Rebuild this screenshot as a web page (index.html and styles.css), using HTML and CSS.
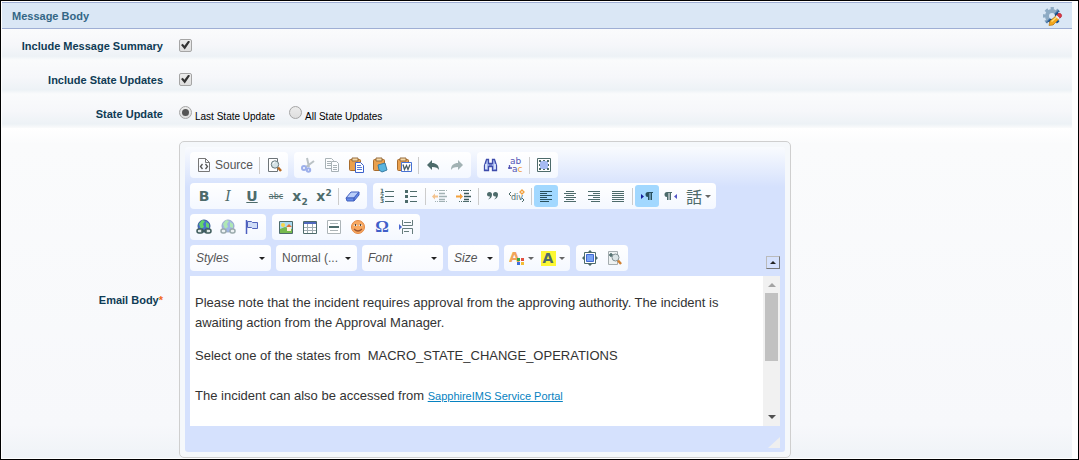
FILE: index.html
```html
<!DOCTYPE html>
<html lang="en">
<head>
  <meta charset="UTF-8">
  <meta name="viewport" content="width=device-width, initial-scale=1.0">
  <title>Message Body</title>
  <link rel="stylesheet" href="styles.css">
</head>
<body>
  <form class="message-body">
    <!-- Section header -->
    <div class="section-header">
      <h2>Message Body</h2>
      <button type="button" class="settings" aria-label="Customize">
        <svg width="20" height="20" viewBox="0 0 20 20">
          <defs><linearGradient id="steel" x1="0" y1="0" x2="1" y2="1"><stop offset=".45" stop-color="#8eabc4"/><stop offset=".6" stop-color="#174f8c"/></linearGradient></defs>
          <g fill="none" stroke="url(#steel)">
            <circle cx="9" cy="10" r="7.500" stroke-width="3" stroke-dasharray="3.200 2.690" stroke-dashoffset="1.600"/>
            <circle cx="9" cy="10" r="5" stroke-width="4"/>
          </g>
          <path d="M7 15l7-6 3 3-7 7-4 .500z" fill="#f3a71c" stroke="#b97813" stroke-width=".7"/>
          <path d="M8.500 15.500l6-5" stroke="#ffdc74" stroke-width="1.500"/>
          <path d="M12.500 10.500l2-2 3 3-2 2z" fill="#e9e7ef"/>
          <path d="M14 9c1-2 3-2 4-1s1 3-1 4z" fill="#dc3644" stroke="#ad2631" stroke-width=".6"/>
        </svg>
      </button>
    </div>

    <div class="row first">
      <label class="name" for="summary">Include Message Summary</label>
      <div class="field"><input type="checkbox" id="summary" checked></div>
    </div>
    <div class="row">
      <label class="name" for="updates">Include State Updates</label>
      <div class="field"><input type="checkbox" id="updates" checked></div>
    </div>
    <div class="row">
      <span class="name" id="stateLabel">State Update</span>
      <div class="field" role="radiogroup" aria-labelledby="stateLabel">
        <input type="radio" name="state" id="lastState" checked><label class="choice" for="lastState">Last State Update</label>
        <input type="radio" name="state" id="allStates"><label class="choice" for="allStates">All State Updates</label>
      </div>
    </div>

    <!-- Email editor -->
    <div class="row email">
      <span class="name" id="emailLabel">Email Body<span class="required">*</span></span>
      <div class="editor">
        <div class="editor-inner">
          <div class="toolbar">
            <div class="tool-row">
              <div class="group">
                <button type="button" class="source">
                  <svg width="16" height="16" viewBox="0 0 16 16" fill="none" stroke="#777"><path d="M2.500 1.500h7l4 4v9h-11zM9.500 1.500v4h4"/><path d="M6.500 7l-2 2.500 2 2.500M9.500 7l2 2.500-2 2.500" stroke="#555" stroke-width="1.300"/></svg>
                  <span>Source</span>
                </button>
                <i class="sep"></i>
                <button type="button" aria-label="Preview">
                  <svg width="16" height="16" viewBox="0 0 16 16"><path d="M2.500 1.500h9v13h-9z" fill="#fff" stroke="#6d7478"/><circle cx="9" cy="7.500" r="3.700" fill="#d5e3e6" stroke="#65777b"/><path d="M7 7a2 2 0 0 1 2-2" stroke="#fff" fill="none"/><path d="M12 10.500l3 3.500" stroke="#b96a21" stroke-width="2.500"/></svg>
                </button>
              </div>
              <div class="group">
                <button type="button" class="off" aria-label="Cut">
                  <svg width="16" height="16" viewBox="0 0 16 16" fill="none"><path d="M7 1l2 9M14 4L6 10" stroke="#7c898d" stroke-width="2"/><circle cx="4" cy="11" r="2" stroke="#4467d8" stroke-width="2"/><circle cx="8.500" cy="13" r="1.700" stroke="#4467d8" stroke-width="2"/></svg>
                </button>
                <button type="button" class="off" aria-label="Copy">
                  <svg width="16" height="16" viewBox="0 0 16 16" fill="#fff" stroke="#5a6b70"><path d="M1.500 1.500h6l2 2v8h-8z"/><path d="M3 4.500h4M3 6.500h4M3 8.500h4"/><path d="M7.500 4.500h5l2 2v8h-7z"/><path d="M9 8.500h4M9 10.500h4M9 12.500h4"/></svg>
                </button>
                <button type="button" aria-label="Paste">
                  <svg width="16" height="16" viewBox="0 0 16 16"><rect x="1.500" y="2.500" width="11" height="11" rx="1" fill="#e9a04e" stroke="#a96c2c"/><path d="M4 1h6v3H4z" fill="#f6d9a8" stroke="#966d3c"/><path d="M7.500 5.500h5l3 3v7h-8z" fill="#fff" stroke="#3c62cc"/><path d="M9 8.500h4M9 10.500h5M9 12.500h5" stroke="#577bd5"/></svg>
                </button>
                <button type="button" aria-label="Paste as plain text">
                  <svg width="16" height="16" viewBox="0 0 16 16"><rect x="1.500" y="2.500" width="11" height="11" rx="1" fill="#e9a04e" stroke="#a96c2c"/><path d="M4 1h6v3H4z" fill="#f6d9a8" stroke="#966d3c"/><path d="M6 8l7-2 2 7-5 2-3-2z" fill="#58b4df" stroke="#397da4"/></svg>
                </button>
                <button type="button" aria-label="Paste from Word">
                  <svg width="16" height="16" viewBox="0 0 16 16"><rect x="1.500" y="2.500" width="11" height="11" rx="1" fill="#e9a04e" stroke="#a96c2c"/><path d="M4 1h6v3H4z" fill="#f6d9a8" stroke="#966d3c"/><path d="M5.500 5.500h10v9h-10z" fill="#fff" stroke="#4772d5"/><path d="M7 7.500l1.500 5 2-4 1.500 4 2-5" fill="none" stroke="#4b5e66" stroke-width="1.300"/></svg>
                </button>
                <i class="sep"></i>
                <button type="button" aria-label="Undo">
                  <svg width="16" height="16" viewBox="0 0 16 16"><path d="M2 8l5-5v3c4 0 7 2 7 7-1-2-3-3-7-3v3z" fill="#4d6b6b"/></svg>
                </button>
                <button type="button" class="off" aria-label="Redo">
                  <svg width="16" height="16" viewBox="0 0 16 16"><path d="M14 8L9 3v3c-4 0-7 2-7 7 1-2 3-3 7-3v3z" fill="#4d6b6b"/></svg>
                </button>
              </div>
              <div class="group">
                <button type="button" aria-label="Find">
                  <svg width="16" height="16" viewBox="0 0 16 16"><path d="M3.500 2.500h2v4h4v-4h2l2 6v5h-4v-4h-4v4h-4v-5z" fill="#a7b9ef" stroke="#3e4cab" stroke-width="1.300"/><path d="M3 7v5M12 7v5" stroke="#eff7ff" stroke-width="1.300"/><path d="M6 8h3" stroke="#3e4cab"/></svg>
                </button>
                <button type="button" aria-label="Replace">
                  <svg width="16" height="16" viewBox="0 0 16 16" class="bitmap-text"><text x="3" y="7">ab</text><text x="5" y="15">a<tspan class="orange">c</tspan></text><path d="M2.500 8v4M1 11h4" stroke="#5355b5" stroke-width="1.300"/></svg>
                </button>
                <i class="sep"></i>
                <button type="button" aria-label="Select All">
                  <svg width="16" height="16" viewBox="0 0 16 16"><path d="M1.500 1.500h13v13h-13z" fill="#fff" stroke="#4d6b6b"/><path d="M4 4h8v8H4z" fill="#a6bbf3"/><path d="M3 3h2v2H3zM7 3h2v1H7zM11 3h2v2h-2zM3 7h1v2H3zM12 7h1v2h-1zM3 11h2v2H3zM7 12h2v1H7zM11 11h2v2h-2z" fill="#4d6b6b"/></svg>
                </button>
              </div>
            </div>

            <div class="tool-row">
              <div class="group">
                <button type="button" class="letter bold" aria-label="Bold">B</button>
                <button type="button" class="letter italic" aria-label="Italic">I</button>
                <button type="button" class="letter underline" aria-label="Underline">U</button>
                <button type="button" class="letter strike" aria-label="Strike Through">abc</button>
                <button type="button" class="letter script" aria-label="Subscript">x<sub>2</sub></button>
                <button type="button" class="letter script" aria-label="Superscript">x<sup>2</sup></button>
                <i class="sep"></i>
                <button type="button" aria-label="Remove Format">
                  <svg width="16" height="16" viewBox="0 0 16 16"><path d="M6 4h8l-5 6H1z" fill="#b9cefa" stroke="#4562c0"/><path d="M1 10h8v3H2zM9 10l5-6v3l-5 6z" fill="#638be8" stroke="#4562c0"/></svg>
                </button>
              </div>
              <div class="group">
                <button type="button" aria-label="Numbered List">
                  <svg width="16" height="16" viewBox="0 0 16 16" class="digits"><text x="1" y="5">1</text><text x="1" y="10">2</text><text x="1" y="15">3</text><path d="M6 3.500h9M6 8.500h9M6 13.500h9" stroke="#4d6b6b"/></svg>
                </button>
                <button type="button" aria-label="Bulleted List">
                  <svg width="16" height="16" viewBox="0 0 16 16"><path d="M2 2h3v3H2zM2 7h3v3H2zM2 12h3v3H2z" fill="#4d6b6b"/><path d="M7 3.500h7M7 8.500h7M7 13.500h7" stroke="#4d6b6b"/></svg>
                </button>
                <i class="sep"></i>
                <button type="button" class="off" aria-label="Decrease Indent">
                  <svg width="16" height="16" viewBox="0 0 16 16"><path d="M3 2.500h12M3 13.500h12" stroke="#4d6b6b" stroke-dasharray="1 1 1 1 6 1"/><path d="M7 5.500h6M7 8.500h8M7 11.500h6" stroke="#4d6b6b" stroke-width="1.500"/><path d="M0 8.500l3-3v2h3v2H3v2z" fill="#f08c20"/></svg>
                </button>
                <button type="button" aria-label="Increase Indent">
                  <svg width="16" height="16" viewBox="0 0 16 16"><path d="M3 2.500h12M3 13.500h12" stroke="#4d6b6b" stroke-dasharray="1 1 1 1 6 1"/><path d="M8 5.500h5M8 8.500h7M8 11.500h5" stroke="#3d5959" stroke-width="1.500"/><path d="M7 8.500l-3-3v2H0v2h4v2z" fill="#f4a23d"/></svg>
                </button>
                <i class="sep"></i>
                <button type="button" aria-label="Block Quote">
                  <svg width="16" height="16" viewBox="0 0 16 16" fill="#4d6b6b"><path d="M2 6.500a2.500 2.500 0 1 1 5 0q0 4-4 5 2-1.500 2-3-3 .500-3-2z"/><path d="M8 6.500a2.500 2.500 0 1 1 5 0q0 4-4 5 2-1.500 2-3-3 .500-3-2z"/></svg>
                </button>
                <button type="button" aria-label="Create Div Container">
                  <svg width="18" height="16" viewBox="0 0 18 16" class="div-text"><text x="3" y="12">div</text><path d="M3 4L1 6l2 2M14 10l2 2-2 2" fill="none" stroke="#4d6b6b"/><path d="M14 2l2 2-2 2-2-2z" fill="none" stroke="#f2a03d" stroke-width="1.300"/></svg>
                </button>
                <i class="sep"></i>
                <button type="button" class="on" aria-label="Align Left">
                  <svg width="16" height="16" viewBox="0 0 16 16"><path d="M2 3.500h12M2 5.500h7M2 7.500h12M2 9.500h7M2 11.500h12M2 13.500h9" stroke="#28505d"/></svg>
                </button>
                <button type="button" aria-label="Center">
                  <svg width="16" height="16" viewBox="0 0 16 16"><path d="M4 3.500h8M2 5.500h12M4 7.500h8M2 9.500h12M4 11.500h8M2 13.500h12" stroke="#4d6b6b"/></svg>
                </button>
                <button type="button" aria-label="Align Right">
                  <svg width="16" height="16" viewBox="0 0 16 16"><path d="M2 3.500h12M7 5.500h7M2 7.500h12M7 9.500h7M2 11.500h12M5 13.500h9" stroke="#4d6b6b"/></svg>
                </button>
                <button type="button" aria-label="Justify">
                  <svg width="16" height="16" viewBox="0 0 16 16"><path d="M2 3.500h12M2 5.500h12M2 7.500h12M2 9.500h12M2 11.500h12M2 13.500h12" stroke="#4d6b6b"/></svg>
                </button>
                <i class="sep"></i>
                <button type="button" class="on" aria-label="Text direction from left to right">
                  <svg width="16" height="16" viewBox="0 0 16 16"><path d="M2 6l3 2.500L2 11z" fill="#181f9c"/><path d="M14 4H9a2.500 2.500 0 0 0 0 5v3h1.500V5h1v7H13V5h1z" fill="#28505d"/></svg>
                </button>
                <button type="button" aria-label="Text direction from right to left">
                  <svg width="16" height="16" viewBox="0 0 16 16"><path d="M14 6l-3 2.500 3 2.500z" fill="#5355c5"/><path d="M9 4H4a2.500 2.500 0 0 0 0 5v3h1.500V5h1v7H8V5h1z" fill="#4d6b6b"/></svg>
                </button>
                <button type="button" class="menu" aria-label="Set language"><span class="lang" lang="ja">話</span><i class="arrow"></i></button>
              </div>
            </div>

            <div class="tool-row">
              <div class="group">
                <button type="button" aria-label="Link">
                  <svg width="16" height="16" viewBox="0 0 16 16"><circle cx="8" cy="7" r="6" fill="#4773cf" stroke="#355a95"/><path d="M3 5l3-4 3 1-2 3 1 3-3 2zM10 3l3 2v4l-3-1z" fill="#65d36c"/><g fill="#dfe8e8" stroke="#3e5b5b" stroke-width="1.500"><rect x="1" y="10" width="6" height="4" rx="2"/><rect x="9" y="10" width="6" height="4" rx="2"/><path d="M5 12h6"/></g></svg>
                </button>
                <button type="button" class="off" aria-label="Unlink">
                  <svg width="16" height="16" viewBox="0 0 16 16"><circle cx="8" cy="7" r="6" fill="#4773cf" stroke="#355a95"/><path d="M3 5l3-4 3 1-2 3 1 3-3 2zM10 3l3 2v4l-3-1z" fill="#65d36c"/><g fill="#dfe8e8" stroke="#3e5b5b" stroke-width="1.500"><rect x="1" y="10" width="5" height="4" rx="2"/><rect x="10" y="10" width="5" height="4" rx="2"/></g></svg>
                </button>
                <button type="button" aria-label="Anchor">
                  <svg width="16" height="16" viewBox="0 0 16 16"><path d="M2.500 1v14" stroke="#4d5fc0" stroke-width="1.500"/><path d="M3.500 2.500h4l1 1h5v6h-5l-1-1h-4z" fill="#cfdcf7" stroke="#5264bb"/></svg>
                </button>
              </div>
              <div class="group">
                <button type="button" aria-label="Image">
                  <svg width="16" height="16" viewBox="0 0 16 16"><path d="M1.500 2.500h13v12h-13z" fill="#acdbf1" stroke="#4d6b6b"/><path d="M2 10l5-2 7 2v4H2z" fill="#76b94e"/><circle cx="5" cy="6" r="2" fill="#f8d649"/><path d="M9 8h4v4H9z" fill="#fff0d5"/><path d="M8 8l3-3 3 3z" fill="#e07038"/></svg>
                </button>
                <button type="button" aria-label="Table">
                  <svg width="16" height="16" viewBox="0 0 16 16"><path d="M1.500 2.500h13v12h-13z" fill="#fff" stroke="#4d6b6b"/><path d="M2 3h12v2H2z" fill="#5068bd"/><path d="M2 8.500h12M2 11.500h12M5.500 5v9M10.500 5v9" stroke="#a0adb3"/></svg>
                </button>
                <button type="button" aria-label="Insert Horizontal Line">
                  <svg width="16" height="16" viewBox="0 0 16 16"><path d="M1.500 1.500h13v13h-13z" fill="#fff" stroke="#adb5b8"/><path d="M4 4.500h8M4 11.500h8" stroke="#adb5b8"/><path d="M3 8h10" stroke="#4d6b6b" stroke-width="2"/></svg>
                </button>
                <button type="button" aria-label="Smiley">
                  <svg width="16" height="16" viewBox="0 0 16 16"><circle cx="8" cy="8" r="6.500" fill="#f8a860" stroke="#e58a45"/><path d="M3.500 7q2-4 4 0zM8.500 7q2-4 4 0z" fill="#fff"/><path d="M5.500 5v2M10.500 5v2" stroke="#53463b" stroke-width="1.300"/><path d="M4 10q4 4 8 0" fill="none" stroke="#9c5430" stroke-width="1.200"/></svg>
                </button>
                <button type="button" class="omega" aria-label="Insert Special Character">Ω</button>
                <button type="button" aria-label="Insert Page Break for Printing">
                  <svg width="16" height="16" viewBox="0 0 16 16"><path d="M1 5l3 3-3 3z" fill="#4a67cf"/><path d="M4.500 1v5.500h10V1M4.500 15V9.500h10V15M6 3.500h7M6 12.500h5" fill="none" stroke="#677d7d"/></svg>
                </button>
              </div>
            </div>

            <div class="tool-row">
              <select class="combo hint" aria-label="Styles"><option>Styles</option></select>
              <select class="combo" aria-label="Paragraph Format"><option>Normal (...</option></select>
              <select class="combo hint" aria-label="Font"><option>Font</option></select>
              <select class="combo hint size" aria-label="Size"><option>Size</option></select>
              <div class="group">
                <button type="button" class="menu" aria-label="Text Color">
                  <svg width="16" height="16" viewBox="0 0 16 16" class="color-a"><text x="0" y="12">A</text><path d="M8 8h3v3H8z" fill="#39a845"/><path d="M12 8h3v3h-3z" fill="#e3503f"/><path d="M8 12h3v3H8z" fill="#3d6ee0"/><path d="M12 12h3v3h-3z" fill="#f3bd35"/></svg>
                  <i class="arrow"></i>
                </button>
                <button type="button" class="menu" aria-label="Background Color"><span class="marker">A</span><i class="arrow"></i></button>
              </div>
              <div class="group">
                <button type="button" aria-label="Maximize">
                  <svg width="16" height="16" viewBox="0 0 16 16"><path d="M2.500 2.500h11v11h-11z" fill="#fff" stroke="#4d6b6b"/><path d="M4.500 4.500h7v7h-7z" fill="#7aa4f4" stroke="#4169d1"/><path d="M8 0l2.500 2.500h-5zM8 16l2.500-2.500h-5zM0 8l2.500-2.500v5zM16 8l-2.500-2.500v5z" fill="#4d6b6b"/></svg>
                </button>
                <button type="button" aria-label="Show Blocks">
                  <svg width="16" height="16" viewBox="0 0 16 16"><path d="M2.500 1.500h9v13h-9z" fill="#eef2f2" stroke="#a5adb0"/><path d="M3 5h4M5 3v4" stroke="#4d6b6b" stroke-width="1.500"/><circle cx="9.500" cy="7.500" r="3.500" fill="#dce5e7" stroke="#829093"/><path d="M12 10.500l3 3.500" stroke="#d18132" stroke-width="2.500"/></svg>
                </button>
              </div>
              <button type="button" class="collapser" aria-label="Collapse Toolbar"></button>
            </div>
          </div>

          <div class="content">
            <div class="text" contenteditable="true" role="textbox" aria-multiline="true" aria-labelledby="emailLabel" spellcheck="false">
              <p>Please note that the incident requires approval from the approving authority. The incident is awaiting action from the Approval Manager.</p>
              <p>Select one of the states from&nbsp; MACRO_STATE_CHANGE_OPERATIONS<br><br>The incident can also be accessed from <a href="#">SapphireIMS Service Portal</a></p>
            </div>
            <div class="scrollbar" aria-hidden="true">
              <i class="up"></i>
              <i class="thumb"></i>
              <i class="down"></i>
            </div>
          </div>
          <div class="bottom"><i class="resizer"></i></div>
        </div>
      </div>
    </div>
  </form>
</body>
</html>
```
FILE: styles.css
```css
* {
  box-sizing: border-box;
}
body {
  margin: 0;
  min-height: 100vh;
  border: 1px solid #000;
  background-color: #fff;
  font-family: Arial, "Liberation Sans", sans-serif;
  font-size: 11px;
}
button {
  font-family: inherit;
  border: none;
  background: none;
  padding: 0;
  cursor: pointer;
}
.message-body {
  padding: 1px 6px 0 1px;
}

/* Section header */
.section-header {
  display: flex;
  align-items: center;
  justify-content: space-between;
  height: 27px;
  padding: 0 9px 0 10px;
  border-top: 1px solid #9fafd4;
  border-bottom: 1px solid #9fafd4;
  background-color: #dae7f5;
}
.section-header h2 {
  margin: 0;
  font-size: 11px;
  color: #336685;
}
.settings {
  display: flex;
}

/* Rows */
.row {
  display: flex;
  align-items: center;
  min-height: 34px;
  padding-top: 6px;
  background: linear-gradient(#fafbfc, #f6f7fa 50%, #edf2f6 88%, #fafbfc);
}
.row.first {
  min-height: 31px;
  padding-top: 3px;
}
.name {
  flex: none;
  width: 177px;
  padding-right: 16px;
  text-align: right;
  font-weight: bold;
  color: #0f3c55;
}
.required {
  color: #f26a1b;
}
.field {
  display: flex;
  align-items: center;
}
.choice {
  margin: 4px 14px 0 3px;
  font-size: 10px;
  color: #000;
}
input {
  appearance: none;
  display: grid;
  place-items: center;
  width: 13px;
  height: 13px;
  margin: 0 0 2px;
  border: 1px solid #a5a5a5;
  background: linear-gradient(#ececec, #dedede);
}
input[type="checkbox"] {
  border-radius: 2px;
}
input[type="checkbox"]:checked::before {
  content: "";
  width: 9px;
  height: 9px;
  background-color: #333;
  clip-path: polygon(0 50%, 20% 36%, 38% 58%, 82% 0, 100% 14%, 42% 100%);
}
input[type="radio"] {
  border-radius: 50%;
  margin-bottom: 4px;
}
input[type="radio"]:checked::before {
  content: "";
  width: 7px;
  height: 7px;
  border-radius: 50%;
  background-color: #555;
}

/* Editor */
.row.email {
  padding-top: 13px;
  background: linear-gradient(#fff, #fafbfc 5%, #f7f8fb 90%, #eff3f7);
}
.editor {
  flex: 0 1 612px;
  padding: 5px;
  border: 1px solid #cfcfcf;
  border-radius: 5px;
  background-color: #f5f8fb;
}
.editor-inner {
  padding: 5px 5px 0;
  border-radius: 3px;
  background: linear-gradient(#f9fbfe, #d5e1fd 40px);
}
.tool-row {
  display: flex;
  height: 26px;
  margin-bottom: 5px;
}
.group {
  display: flex;
  align-items: center;
  padding: 2px;
  margin-right: 6px;
  border-radius: 4px;
  background: linear-gradient(#fff, #f4f8ff);
}
.group button {
  display: flex;
  align-items: center;
  justify-content: center;
  width: 24px;
  height: 22px;
  border-radius: 3px;
  color: #4d6b6b;
}
.group .source {
  width: 65px;
  gap: 3px;
  font-size: 12px;
  color: #555;
}
.group .menu {
  width: 31px;
  gap: 3px;
}
.group .off svg {
  opacity: 0.5;
}
.group .on {
  background-color: #a2d8ff;
}
.sep {
  width: 1px;
  height: 17px;
  margin: 0 2px;
  background-color: #ccc;
}
.arrow {
  border: 3px solid transparent;
  border-top-color: #666;
  border-bottom: none;
}

/* Text style buttons */
.letter {
  font-size: 14px;
}
.bold,
.underline,
.script {
  font-family: "DejaVu Sans", sans-serif;
  font-weight: bold;
}
.italic {
  font-family: "DejaVu Serif", serif;
  font-style: italic;
}
.underline {
  text-decoration: underline;
}
.group .strike {
  font-family: "DejaVu Sans", sans-serif;
  font-size: 8px;
  text-decoration: line-through;
}
.script sub,
.script sup {
  font-size: 9px;
  line-height: 8px;
}
.script sub {
  align-self: flex-end;
  padding-bottom: 1px;
}
.script sup {
  align-self: flex-start;
  padding-top: 4px;
}
.bitmap-text {
  font: 9px "DejaVu Sans", sans-serif;
  fill: #5355b5;
  stroke-width: 0;
}
.bitmap-text .orange {
  fill: #f2a03d;
}
.digits {
  font: bold 6px "DejaVu Sans", sans-serif;
  fill: #4d6b6b;
}
.div-text {
  font: 8px "DejaVu Sans", sans-serif;
  fill: #4d6b6b;
}
.lang {
  font: 16px "Noto Sans CJK JP", sans-serif;
  line-height: 18px;
}
.omega {
  font: bold 17px "Liberation Serif", serif;
}
.group .omega {
  color: #405fc9;
}
.color-a {
  font: bold 14px "DejaVu Sans", sans-serif;
  fill: #f2a55a;
}
.marker {
  width: 15px;
  font: bold 14px "DejaVu Sans", sans-serif;
  line-height: 15px;
  background-color: #fdf733;
  color: #4d6b6b;
}

/* Combos */
.combo {
  appearance: none;
  width: 81px;
  height: 26px;
  margin: 0 5px 0 0;
  padding: 0 6px;
  border: none;
  border-radius: 4px;
  font-family: inherit;
  font-size: 12px;
  color: #555;
  background: url("data:image/svg+xml,%3Csvg xmlns='http://www.w3.org/2000/svg' width='6' height='3'%3E%3Cpath d='M0 0h6L3 3z' fill='%23222'/%3E%3C/svg%3E") no-repeat right 6px center, linear-gradient(#fff, #f8faff);
}
.combo.hint {
  font-style: italic;
}
.combo.size {
  width: 51px;
}
.collapser {
  display: flex;
  align-items: center;
  justify-content: center;
  align-self: flex-end;
  width: 14px;
  height: 13px;
  margin: 0 0 2px auto;
}
.tool-row .collapser {
  border: 1px solid #777;
  border-top-color: #bbb;
  border-left-color: #bbb;
}
.collapser::before {
  content: "";
  border: 3px solid transparent;
  border-bottom-color: #222;
  border-top: none;
}

/* Message text */
.content {
  display: flex;
  height: 150px;
  background-color: #fff;
}
.text {
  flex: 1;
  overflow: hidden;
  padding: 4px 20px 0 5px;
  outline: none;
  font-size: 13px;
  line-height: 20px;
  color: #333;
}
.text p {
  margin: 13px 0;
}
.text a {
  font-size: 11px;
  color: #0782c1;
}
.scrollbar {
  display: flex;
  flex-direction: column;
  align-items: center;
  width: 17px;
  padding: 7px 0;
  background-color: #f1f1f1;
}
.up {
  border: 4px solid transparent;
  border-bottom-color: #a3a3a3;
  border-top: none;
}
.thumb {
  width: 13px;
  height: 68px;
  margin: 6px 0 auto;
  background-color: #c1c1c1;
}
.down {
  border: 4px solid transparent;
  border-top-color: #505050;
  border-bottom: none;
}
.bottom {
  display: flex;
  justify-content: flex-end;
  align-items: flex-end;
  height: 26px;
  padding-bottom: 4px;
}
.resizer {
  border-left: 12px solid transparent;
  border-bottom: 11px solid #efefef;
}
```
